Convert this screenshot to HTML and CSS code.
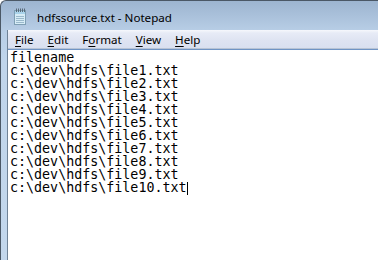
FILE: index.html
```html
<!DOCTYPE html>
<html>
<head>
<meta charset="utf-8">
<link rel="stylesheet" href="styles.css">
</head>
<body>
<div class="window">
  <div class="titlebar">
    <svg class="appicon" width="14" height="17" viewBox="0 0 14 17">
      <rect x="1.5" y="2.5" width="11" height="14" fill="#d7ecf6" stroke="#7f9fb4"/>
      <rect x="2" y="3" width="10" height="3" fill="#a9d3ea"/>
      <line x1="3" y1="8.5" x2="11" y2="8.5" stroke="#9ab9cc"/>
      <line x1="3" y1="10.5" x2="11" y2="10.5" stroke="#9ab9cc"/>
      <line x1="3" y1="12.5" x2="11" y2="12.5" stroke="#9ab9cc"/>
      <line x1="3" y1="14.5" x2="11" y2="14.5" stroke="#9ab9cc"/>
      <g stroke="#5a6a78" stroke-width="1">
        <line x1="3.5" y1="0.5" x2="3.5" y2="4"/>
        <line x1="5.5" y1="0.5" x2="5.5" y2="4"/>
        <line x1="7.5" y1="0.5" x2="7.5" y2="4"/>
        <line x1="9.5" y1="0.5" x2="9.5" y2="4"/>
        <line x1="11.5" y1="0.5" x2="11.5" y2="4"/>
      </g>
    </svg>
    <span class="title">hdfssource.txt - Notepad</span>
  </div>
  <div class="client">
    <div class="menubar">
      <span class="menu"><u>F</u>ile</span>
      <span class="menu"><u>E</u>dit</span>
      <span class="menu">F<u>o</u>rmat</span>
      <span class="menu"><u>V</u>iew</span>
      <span class="menu"><u>H</u>elp</span>
    </div>
    <div class="editor"><pre class="text">filename
c:\dev\hdfs\file1.txt
c:\dev\hdfs\file2.txt
c:\dev\hdfs\file3.txt
c:\dev\hdfs\file4.txt
c:\dev\hdfs\file5.txt
c:\dev\hdfs\file6.txt
c:\dev\hdfs\file7.txt
c:\dev\hdfs\file8.txt
c:\dev\hdfs\file9.txt
c:\dev\hdfs\file10.txt<span class="caret"></span></pre></div>
  </div>
</div>
</body>
</html>
```
FILE: styles.css
```css
html, body {
  margin: 0;
  padding: 0;
  background: #ffffff;
  overflow: hidden;
}
.window {
  width: 378px;
  height: 260px;
  border-top: 1px solid #4b5866;
  border-left: 1px solid #4b5866;
  border-top-left-radius: 6px;
  background: linear-gradient(to bottom, #9db5d0 0px, #a9c0da 14px, #b8cee6 30px, #c0d5eb 60px, #c3d7ec 100%);
  padding-left: 6px;
  box-sizing: border-box;
  display: flex;
  flex-direction: column;
}
.titlebar {
  height: 29px;
  display: flex;
  align-items: center;
  padding-left: 6px;
  gap: 10px;
}
.appicon {
  margin-top: 2px;
}
.title {
  font-family: "Noto Sans", "Liberation Sans", sans-serif;
  font-size: 11.6px;
  color: #000;
  margin-top: 3px;
}
.client {
  flex: 1;
  border-left: 1px solid #6f8296;
  display: flex;
  flex-direction: column;
}
.menubar {
  height: 18px;
  background: linear-gradient(to bottom, #f6f8fc 0px, #e7ebf6 3px, #dfe4f2 10px, #d9e0f0 100%);
  border-bottom: 1px solid #b8c3d4;
  display: flex;
  align-items: center;
  font-family: "Noto Sans", "Liberation Sans", sans-serif;
  font-size: 11.6px;
  color: #000;
}
.menu {
  padding: 0 7px;
  margin-top: 1px;
}
.menu u {
  text-decoration-thickness: 1px;
  text-underline-offset: 2px;
}
.editor {
  flex: 1;
  background: #fff;
  border-top: 1px solid #6f94c5;
  padding: 1px 0 0 2px;
}
.text {
  margin: 0;
  font-family: "DejaVu Sans Mono", "Liberation Mono", monospace;
  font-size: 13.33px;
  line-height: 13px;
  color: #000;
}
.caret {
  display: inline-block;
  width: 1px;
  height: 13px;
  background: #000;
  vertical-align: -3px;
}
```
